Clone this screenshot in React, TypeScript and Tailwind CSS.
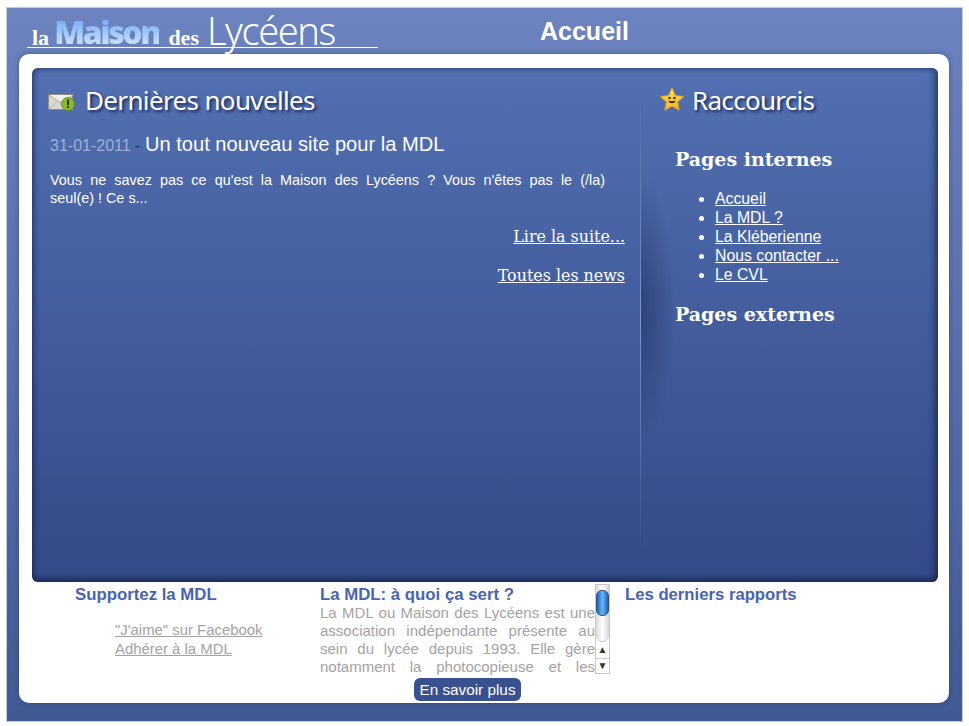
import React from 'react';

const sans = "font-['Liberation_Sans',Arial,sans-serif]";
const ubuntu = "font-['Noto_Sans',sans-serif]";
const serif = "font-['DejaVu_Serif',serif]";

const MailIcon = () => (
  <svg width="28" height="18" viewBox="0 0 28 18" className="mt-[4px] shrink-0">
    <rect x="0.5" y="1.5" width="24" height="15" fill="#d8d8d2" stroke="#8f8f88" />
    <path d="M1 2 L13 10 L25 2" fill="#f0f0ec" stroke="#a8a8a2" />
    <path d="M1 16 L10 8 M24 16 L16 8" stroke="#b8b8b2" fill="none" />
    <circle cx="20" cy="11" r="6.5" fill="#8cb92c" stroke="#6a8f1c" />
    <rect x="19" y="6.5" width="2" height="5.5" fill="#2c3a10" />
    <rect x="19" y="13" width="2" height="2" fill="#2c3a10" />
  </svg>
);

const StarIcon = () => (
  <svg width="26" height="26" viewBox="0 0 26 26" className="shrink-0">
    <defs>
      <linearGradient id="star" x1="0" y1="0" x2="0" y2="1">
        <stop offset="0" stopColor="#ffe05a" />
        <stop offset="1" stopColor="#f7b520" />
      </linearGradient>
    </defs>
    <path
      d="M13 1 L16.4 8.6 L24.6 9.5 L18.5 15 L20.2 23.2 L13 19 L5.8 23.2 L7.5 15 L1.4 9.5 L9.6 8.6 Z"
      fill="url(#star)"
      stroke="#e6a41c"
      strokeLinejoin="round"
    />
    <circle cx="10.5" cy="11" r="1.2" fill="#3a2a05" />
    <circle cx="15.5" cy="11" r="1.2" fill="#3a2a05" />
    <path d="M9 14 Q13 18.5 17 14 Z" fill="#3a2a05" />
  </svg>
);

const Scrollbar = () => (
  <div className="flex h-[90px] w-[15px] shrink-0 flex-col border border-[#c8c8c8] bg-white">
    <div className="flex h-[57px] flex-col rounded-b-[7px] border-b border-[#bcbcbc] bg-gradient-to-r from-[#dcdcdc] via-white to-[#d4d4d4]">
      <div className="mx-auto mt-[5px] h-[26px] w-[13px] rounded-[6px] border border-[#34507c] bg-gradient-to-r from-[#0a64c8] via-[#6ab4f4] to-[#0a64c8]" />
    </div>
    <div className="flex h-[17px] items-center justify-center border-b border-[#c8c8c8] text-[10px] leading-none text-[#333]">▲</div>
    <div className="flex flex-1 items-center justify-center text-[10px] leading-none text-[#333]">▼</div>
  </div>
);

const App: React.FC = () => {
  return (
    <div className={`h-[726px] w-[969px] overflow-hidden bg-white pl-[6px] pt-[7px] ${sans}`}>
      <div className="h-[715px] w-[957px] border border-[#c4cad8] bg-gradient-to-b from-[#6c83c0] to-[#425a94]">
        {/* Header */}
        <header className="flex h-[46px] items-start">
          <div className="ml-[20px] mt-[6px] flex h-[34px] w-[351px] items-end border-b border-white pl-[5px] text-white">
            <span className="font-['Liberation_Serif',serif] text-[22px] font-bold leading-[18px]">la</span>
            <span className={`ml-[5px] bg-gradient-to-b from-[#6aa8f4] to-[#d4e6fc] bg-clip-text text-[32px] font-black leading-[30px] tracking-[-2.4px] text-transparent ${ubuntu}`}>Maison</span>
            <span className="ml-[9px] font-['Liberation_Serif',serif] text-[22px] font-bold leading-[18px]">des</span>
            <span className={`mb-[-5px] ml-[8px] text-[38px] font-light leading-[44px] tracking-[-1.4px] ${ubuntu}`}>Lycéens</span>
          </div>
          <h1 className="ml-[162px] mt-[7px] text-[25px] font-bold leading-[32px] text-white">Accueil</h1>
        </header>

        <main className="ml-[12px] h-[649px] w-[930px] rounded-[10px] bg-white px-[13px] pt-[14px] shadow-[0_0_5px_rgba(30,45,90,0.5)]">
          {/* Main panel */}
          <section className="flex h-[514px] w-[906px] rounded-[6px] bg-gradient-to-b from-[#5270b2] to-[#344a88] shadow-[inset_0_-3px_6px_rgba(15,25,60,0.5),inset_-4px_0_6px_rgba(15,25,60,0.4),inset_3px_0_5px_rgba(15,25,60,0.25)]">
            <div className="w-[608px] pl-[16px] pr-[15px] pt-[16px]">
              <h2 className={`flex h-[32px] items-center text-[26px] leading-[32px] tracking-[-0.65px] text-white [text-shadow:2px_2px_3px_rgba(15,25,70,0.8)] ${ubuntu}`}>
                <MailIcon />
                <span className="ml-[9px]">Dernières nouvelles</span>
              </h2>
              <p className="ml-[2px] mt-[15px] flex items-baseline leading-[26px]">
                <span className="text-[16px] text-[#9fb1d8]">31-01-2011</span>
                <span className="ml-[4px] text-[16px] text-[#20305c]">-</span>
                <span className="ml-[5px] text-[20.1px] text-white">Un tout nouveau site pour la MDL</span>
              </p>
              <p className="ml-[2px] mr-[20px] mt-[12px] text-[14.4px] leading-[18px] text-white">
                <span className="block text-justify [text-align-last:justify]">Vous ne savez pas ce qu'est la Maison des Lycéens ? Vous n'êtes pas le (/la)</span>
                <span className="block">seul(e) ! Ce s...</span>
              </p>
              <div className={`mt-[19px] text-right text-[15.9px] leading-[22px] text-white ${serif}`}>
                <a className="underline" href="#">Lire la suite...</a>
              </div>
              <div className={`mt-[17px] text-right text-[15.9px] leading-[22px] text-white ${serif}`}>
                <a className="underline" href="#">Toutes les news</a>
              </div>
            </div>

            <div className="mt-[14px] h-[470px] w-px bg-gradient-to-b from-transparent via-[#7d94cc] to-transparent" />

            <div className="relative mt-[14px] h-[470px] w-[297px] pl-[18px] pt-[2px]">
              <div className="absolute left-0 top-[90px] h-[270px] w-[34px] bg-[radial-gradient(ellipse_at_left,rgba(20,30,70,0.42),transparent_70%)]" />
              <h2 className={`relative flex h-[32px] items-center text-[26px] leading-[32px] tracking-[-0.7px] text-white [text-shadow:2px_2px_3px_rgba(15,25,70,0.8)] ${ubuntu}`}>
                <StarIcon />
                <span className="ml-[7px]">Raccourcis</span>
              </h2>
              <h3 className={`relative ml-[16px] mt-[29px] text-[19px] font-bold leading-[28px] text-white ${serif}`}>Pages internes</h3>
              <ul className="relative ml-[56px] mt-[16px] list-disc text-[15.8px] leading-[19px] text-white">
                <li><a className="underline" href="#">Accueil</a></li>
                <li><a className="underline" href="#">La MDL ?</a></li>
                <li><a className="underline" href="#">La Kléberienne</a></li>
                <li><a className="underline" href="#">Nous contacter ...</a></li>
                <li><a className="underline" href="#">Le CVL</a></li>
              </ul>
              <h3 className={`relative ml-[16px] mt-[16px] text-[19px] font-bold leading-[28px] text-white ${serif}`}>Pages externes</h3>
            </div>
          </section>

          {/* Bottom columns */}
          <section className="flex h-[121px]">
            <div className="ml-[43px] w-[245px] pt-[3px]">
              <h4 className="text-[16.8px] font-bold leading-[19px] text-[#4864ae]">Supportez la MDL</h4>
              <ul className="ml-[40px] mt-[17px] text-[14.9px] leading-[19px] text-[#a3a3a3]">
                <li><a className="underline" href="#">"J'aime" sur Facebook</a></li>
                <li><a className="underline" href="#">Adhérer à la MDL</a></li>
              </ul>
            </div>
            <div className="w-[305px]">
              <div className="flex h-[92px] w-[290px] items-start pt-[2px]">
                <div className="w-[275px]">
                  <h4 className="pt-[1px] text-[16.8px] font-bold leading-[19px] text-[#4864ae]">La MDL: à quoi ça sert ?</h4>
                  <p className="text-justify text-[15px] leading-[18px] text-[#a3a3a3] [text-align-last:justify]">
                    La MDL ou Maison des Lycéens est une association indépendante présente au sein du lycée depuis 1993. Elle gère notamment la photocopieuse et les
                  </p>
                </div>
                <Scrollbar />
              </div>
              <div className="ml-[94px] mt-[4px] flex h-[23px] w-[107px] items-center justify-center rounded-[6px] bg-[#3a5190] pt-[1px] text-[15.3px] text-white">En savoir plus</div>
            </div>
            <div className="pt-[3px]">
              <h4 className="text-[16.7px] font-bold leading-[19px] text-[#4864ae]">Les derniers rapports</h4>
            </div>
          </section>
        </main>
      </div>
    </div>
  );
};

export default App;
